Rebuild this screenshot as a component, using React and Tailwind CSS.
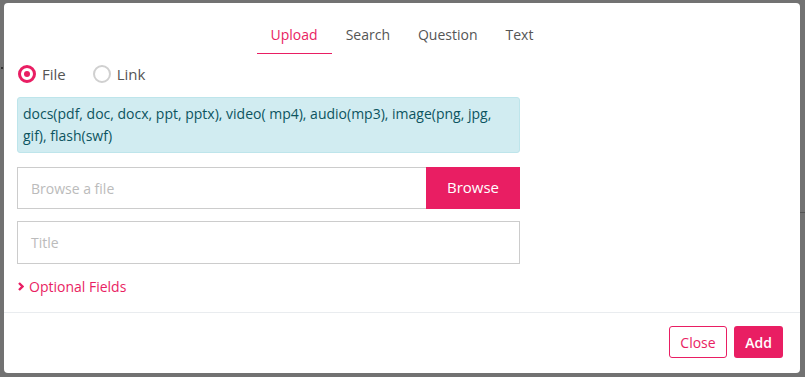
import React from "react";

export default function App() {
  const font = { fontFamily: '"Open Sans", "Noto Sans", sans-serif' };
  return (
    <div className="w-[805px] h-[377px] bg-[#727272] overflow-hidden relative" style={font}>
      <div className="absolute left-[800px] top-[212px] w-[5px] h-[1px] bg-[#555]" />
      <div className="absolute left-[1px] top-[67px] w-[2px] h-[2px] bg-[#333]" />
      <div className="ml-[4px] mt-[3px] w-[796px] h-[370px] bg-white rounded-[4px] flex flex-col">
        {/* Tabs */}
        <div className="flex justify-center mt-[13px]">
          <div className="px-[14px] h-[38px] flex items-center border-b border-[#e91e63] text-[14px] text-[#e91e63] leading-[20px]">Upload</div>
          <div className="px-[14px] h-[38px] flex items-center text-[14px] text-[#555] leading-[20px]">Search</div>
          <div className="px-[14px] h-[38px] flex items-center text-[14px] text-[#555] leading-[20px]">Question</div>
          <div className="px-[14px] h-[38px] flex items-center text-[14px] text-[#555] leading-[20px]">Text</div>
        </div>
        <div className="px-[13px]">
          {/* Radios */}
          <div className="flex items-center mt-[9px] h-[22px]">
            <div className="flex items-center">
              <span className="w-[18px] h-[18px] rounded-full border-[3px] border-[#e91e63] flex items-center justify-center ml-[1px]">
                <span className="w-[6px] h-[6px] rounded-full bg-[#e91e63]" />
              </span>
              <span className="ml-[6px] text-[15px] text-[#555]">File</span>
            </div>
            <div className="flex items-center ml-[27px]">
              <span className="w-[18px] h-[18px] rounded-full border-[2px] border-[#d0d0d0]" />
              <span className="ml-[6px] text-[15px] text-[#555]">Link</span>
            </div>
          </div>
          {/* Info */}
          <div className="mt-[12px] w-[503px] h-[56px] bg-[#d1ecf1] border border-[#bee5eb] rounded-[3px] px-[5px] py-[5px] text-[14px] leading-[22px] text-[#0c5460]">
            docs(pdf, doc, docx, ppt, pptx), video( mp4), audio(mp3), image(png, jpg, gif), flash(swf)
          </div>
          {/* Browse */}
          <div className="mt-[14px] w-[503px] h-[42px] flex">
            <div className="flex-1 border border-[#ccc] border-r-0 flex items-center pl-[13px] text-[14px] text-[#bbb]">Browse a file</div>
            <div className="w-[94px] bg-[#e91e63] text-white text-[15px] flex items-center justify-center pb-[2px]">Browse</div>
          </div>
          {/* Title */}
          <div className="mt-[12px] w-[503px] h-[43px] border border-[#ccc] flex items-center pl-[13px] text-[14px] text-[#bbb]">Title</div>
          {/* Optional */}
          <div className="mt-[12px] flex items-center h-[20px] text-[14px] text-[#e91e63]">
            <svg width="6" height="9" viewBox="0 0 6 9" className="ml-[1px]">
              <path d="M1 1 L4.5 4.5 L1 8" stroke="#e91e63" strokeWidth="2.4" fill="none" />
            </svg>
            <span className="ml-[5px]">Optional Fields</span>
          </div>
        </div>
        {/* Footer */}
        <div className="mt-[16px] border-t border-[#e9ecef] flex justify-end items-center pt-[13px] pr-[17px] gap-[7px]">
          <div className="w-[58px] h-[32px] border border-[#e91e63] rounded-[3px] text-[#e91e63] text-[14px] flex items-center justify-center">Close</div>
          <div className="w-[49px] h-[32px] bg-[#e91e63] rounded-[3px] text-white text-[14px] font-semibold flex items-center justify-center">Add</div>
        </div>
      </div>
    </div>
  );
}
